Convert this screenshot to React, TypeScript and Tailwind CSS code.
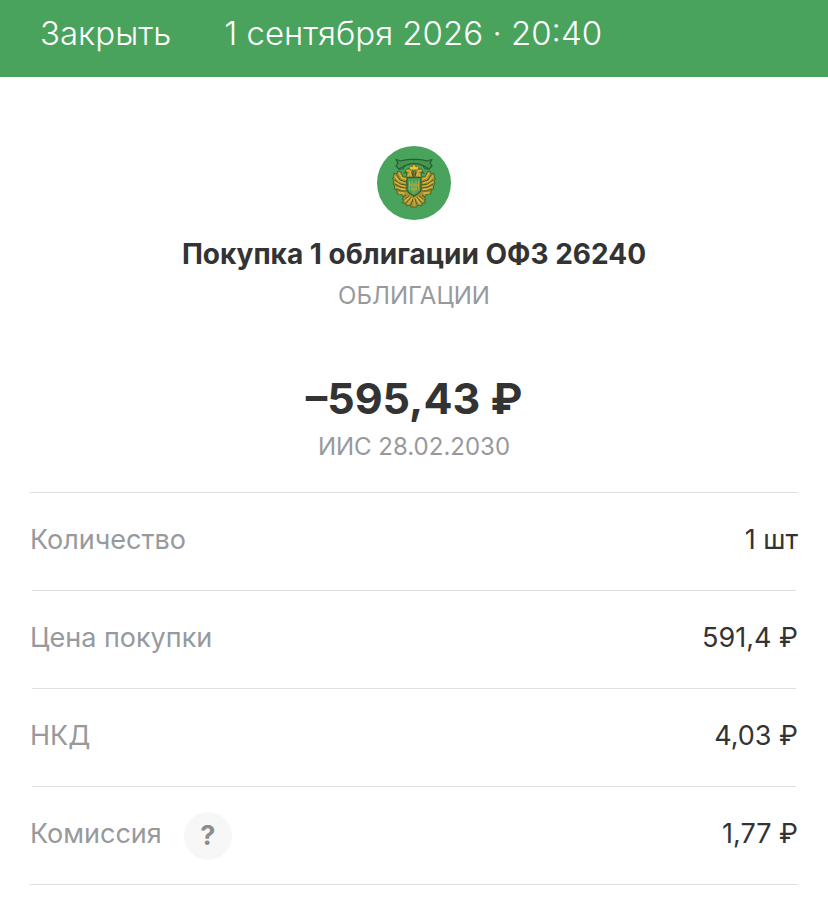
import React from "react";

const rows = [
  { label: "Количество", value: "1 шт" },
  { label: "Цена покупки", value: "591,4 ₽" },
  { label: "НКД", value: "4,03 ₽" },
  { label: "Комиссия", value: "1,77 ₽", help: true },
];

/** Left half of the double-headed eagle; the right half is its mirror. */
function EagleHalf() {
  return (
    <g strokeLinecap="round" strokeLinejoin="round">
      <path
        d="M37 26 L34 23 L31 22.500 L28 25 L30 28 L29 31 L26 31 L24 26 L21 25 L20 28 L17 27 L17 31 L15.500 32 L17 35 L16 38 L18 40 L17 43 L20 44 L20 48 L24 48 L26 51 L29 49 L25 53 L27 54 L25 57 L29 57 L29 60 L33 59 L34 61 L37 61 Z"
        fill="#a99035"
        stroke="#47682f"
        strokeWidth="1"
      />
      <path d="M20 29 L23 34 L29 36 M18 34 L23 38 L29 39 M18 38 L23 41 L29 42 M20 43 L24 45 L29 45" fill="none" stroke="#46582b" strokeWidth="1" />
      <path d="M22 27 L25 32 L29 33 M18 30 L22 35 L28 37 M18 36 L23 39 L28 40.500 M19 41 L24 43 L28 43.500 M22 47 L27 47" fill="none" stroke="#dfb832" strokeWidth="1.300" />
      <path d="M33 51 L28 55 M35 52 L31 58 M37 52 V60" fill="none" stroke="#dfb832" strokeWidth="1.300" />
      <path d="M32 50 L28 53 M34 51 L30 56 M36 53 L34 59" fill="none" stroke="#465c29" strokeWidth="0.900" />
      <path d="M30 24.500 L33 25 L34 30 M32 28 L31 31" fill="none" stroke="#d9b536" strokeWidth="1.400" />
      <path d="M27 27 L30 26.500 M35 26 L36 30" fill="none" stroke="#35512d" strokeWidth="1.100" />
      <path d="M37 13.500 Q29 13 24 15 L19 13.500 L21 17 L19 20 L22 23 L27 20 Q32 17.500 37 17.500" fill="#46984f" stroke="#245f35" strokeWidth="1.300" />
      <path d="M22 23 L26 23 L28 20" fill="none" stroke="#245f35" strokeWidth="1.100" />
    </g>
  );
}

function Emblem() {
  return (
    <svg viewBox="0 0 74 74" className="size-[74px]" role="img" aria-label="Эмблема Минфина">
      <circle cx="37" cy="37" r="37" fill="#4aa35d" />
      <EagleHalf />
      <g transform="translate(74 0) scale(-1 1)">
        <EagleHalf />
      </g>
      <path d="M33 24 L32 19.500 L35 21 L37 18 L39 21 L42 19.500 L41 24 Z" fill="#efc62e" stroke="#756c28" strokeWidth="0.800" />
      <path d="M30 31.500 H44 V44 Q43 47 37 50 Q31 47 30 44 Z" fill="#4aa35d" stroke="#385b2d" strokeWidth="1.300" />
      <path d="M32.500 35 V44 M35 35 V45 M39 35 V45 M41.500 35 V44 M37 37 V47 M32 39 H42 M34 43 H40" fill="none" stroke="#b9a93c" strokeWidth="1" />
    </svg>
  );
}

export default function App() {
  return (
    <div className="min-h-screen bg-white font-['Inter',sans-serif] text-[#333333]">
      <header className="flex items-start gap-[53px] bg-[#4aa35d] px-10 pt-[11px] pb-[22px] text-[33px] leading-[44px] font-[350] text-white">
        <button type="button">Закрыть</button>
        <h1>1 сентября 2026 · 20:40</h1>
      </header>
      <main className="px-[30px]">
        <section className="flex flex-col items-center pt-[69px] text-center">
          <Emblem />
          <h2 className="mt-4 text-[28px] leading-9 font-bold">Покупка 1 облигации ОФЗ 26240</h2>
          <p className="mt-2 text-[24px] leading-8 text-[#97999d]">ОБЛИГАЦИИ</p>
          <p className="mt-[58px] text-[43px] leading-[56px] font-bold">–595,43 ₽</p>
          <p className="mt-[5px] text-[24px] leading-8 text-[#97999d]">ИИС 28.02.2030</p>
        </section>
        <dl className="mt-[29px] border-y border-[#dddfe0]">
          {rows.map((r) => (
            <div
              key={r.label}
              className="text-[27px] after:mx-0.5 after:block after:h-px after:bg-[#dddfe0] last:after:hidden"
            >
              <div className="flex h-[97px] items-center justify-between">
                <dt className="flex items-center gap-[22px] text-[#97999d]">
                  <span className="pb-0.5">{r.label}</span>
                  {r.help && (
                    <button
                      type="button"
                      aria-label="Подробнее о комиссии"
                      className="size-12 rounded-full bg-[#f7f7f7] pt-0.5 font-bold text-[#8b8d90]"
                    >
                      ?
                    </button>
                  )}
                </dt>
                <dd className="pb-0.5">{r.value}</dd>
              </div>
            </div>
          ))}
        </dl>
      </main>
    </div>
  );
}
